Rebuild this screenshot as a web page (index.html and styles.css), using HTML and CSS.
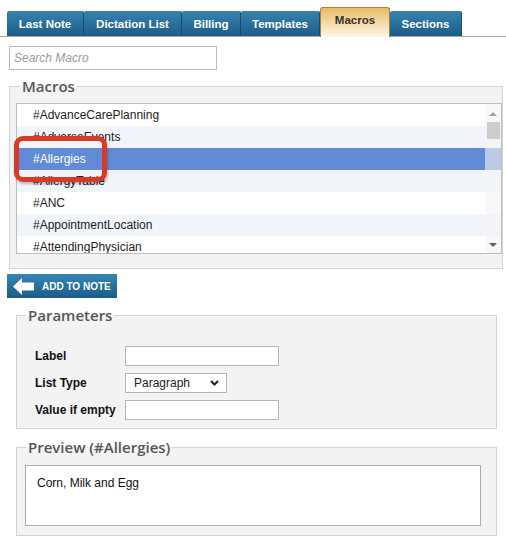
FILE: index.html
```html
<!DOCTYPE html>
<html>
<head>
<meta charset="utf-8">
<link rel="stylesheet" href="styles.css">
</head>
<body>
<div class="tabs">
  <div class="tab tab-last">Last Note</div>
  <div class="tab tab-dict">Dictation List</div>
  <div class="tab tab-bill">Billing</div>
  <div class="tab tab-tmpl">Templates</div>
  <div class="tab tab-macro active">Macros</div>
  <div class="tab tab-sect">Sections</div>
</div>

<div class="search-row">
  <input class="search" type="text" placeholder="Search Macro">
</div>

<fieldset class="box macros">
  <legend>Macros</legend>
  <div class="list">
    <div class="row">#AdvanceCarePlanning</div>
    <div class="row alt">#AdverseEvents</div>
    <div class="row selected">#Allergies</div>
    <div class="row alt">#AllergyTable</div>
    <div class="row">#ANC</div>
    <div class="row alt">#AppointmentLocation</div>
    <div class="row">#AttendingPhysician</div>
    <div class="scrollbar">
      <div class="arrow up"></div>
      <div class="thumb"></div>
      <div class="arrow down"></div>
    </div>
  </div>
  <div class="highlight"></div>
</fieldset>

<button class="add-btn" type="button">
  <svg class="add-icon" width="21" height="17" viewBox="0 0 21 17">
    <path d="M0 8.5 L9 0 L9 4.5 L21 4.5 L21 12.5 L9 12.5 L9 17 Z" fill="#ffffff"/>
  </svg>
  <span>ADD TO NOTE</span>
</button>

<fieldset class="box params">
  <legend>Parameters</legend>
  <div class="form">
    <label class="lbl">Label</label>
    <input class="field" type="text">
    <label class="lbl">List Type</label>
    <div class="select-wrap">
      <select class="select">
        <option>Paragraph</option>
      </select>
      <svg class="chev" width="9" height="6" viewBox="0 0 9 6"><path d="M1 1 L4.5 4.5 L8 1" fill="none" stroke="#222" stroke-width="2"/></svg>
    </div>
    <label class="lbl">Value if empty</label>
    <input class="field" type="text">
  </div>
</fieldset>

<fieldset class="box preview">
  <legend>Preview (#Allergies)</legend>
  <div class="preview-box">Corn, Milk and Egg</div>
</fieldset>
</body>
</html>
```

FILE: styles.css
```css
* { box-sizing: border-box; }
body {
  margin: 0;
  font-family: "Liberation Sans", Arial, sans-serif;
  font-size: 12px;
  color: #222;
  background: #fff;
}

.tabs {
  display: flex;
  align-items: flex-end;
  padding: 7px 0 0 7px;
  border-bottom: 1px solid #a9a49c;
  height: 37px;
}
.tab {
  height: 25px;
  line-height: 26px;
  text-align: center;
  color: #fff;
  font-weight: bold;
  font-size: 11.5px;
  background: linear-gradient(#3983b0, #1b5c87);
  border-right: 1px solid #174c70;
  border-radius: 2px 2px 0 0;
}
.tab-last { width: 77px; }
.tab-dict { width: 98px; }
.tab-bill { width: 59px; }
.tab-tmpl { width: 79px; }
.tab-macro { width: 70px; }
.tab-sect { width: 72px; }
.tab.active {
  height: 30px;
  line-height: 25px;
  margin-bottom: -1px;
  color: #3a3328;
  background: linear-gradient(#e8bb66, #fdf7e8);
  border: 1px solid #a5813f;
  border-bottom: none;
  border-radius: 3px 3px 0 0;
}

.search-row { padding: 9px 0 0 9px; }
.search {
  width: 208px;
  height: 24px;
  border: 1px solid #bcbcbc;
  padding: 0 4px;
  font-family: "Liberation Sans", Arial, sans-serif;
  font-size: 12px;
}
.search::placeholder { color: #9a9a9a; font-style: italic; }

.box {
  margin: 0;
  min-width: 0;
  border: 1px solid #d3d3d3;
  background: #f3f3f3;
}
.box legend {
  font-family: "Open Sans", sans-serif;
  font-weight: 600;
  font-size: 15px;
  line-height: 20px;
  color: #575757;
  padding: 0 2px;
  margin-left: 1px;
}

.macros {
  position: relative;
  margin: 6px 3px 0 9px;
  padding: 7px 0 14px 6px;
}
.macros legend { margin-left: 4px; }
.list {
  position: relative;
  height: 151px;
  border: 1px solid #bebebe;
  background: #fff;
  overflow: hidden;
}
.row {
  height: 22px;
  line-height: 22px;
  padding-left: 16px;
  color: #222;
}
.row.alt { background: #f1f5fa; }
.row.selected { background: #618bd6; color: #fff; }

.scrollbar {
  position: absolute;
  top: 0;
  right: 0;
  bottom: 0;
  width: 16px;
  background: rgba(244, 244, 244, 0.62);
  display: flex;
  flex-direction: column;
  align-items: center;
}
.arrow {
  width: 0;
  height: 0;
  border-left: 4px solid transparent;
  border-right: 4px solid transparent;
}
.arrow.up { border-bottom: 4px solid #a3a3a3; margin-top: 8px; }
.arrow.down { border-top: 4px solid #606060; margin-top: auto; margin-bottom: 6px; }
.thumb {
  width: 13px;
  height: 17px;
  margin-top: 6px;
  background: #cdcdcd;
}

.highlight {
  position: absolute;
  left: 4px;
  top: 40px;
  width: 93px;
  height: 46px;
  border: 5px solid #d93a28;
  border-radius: 9px;
  box-shadow: 1px 2px 3px rgba(0, 0, 0, 0.25);
}

.add-btn {
  display: flex;
  align-items: center;
  gap: 8px;
  margin: 5px 0 0 7px;
  width: 110px;
  height: 24px;
  padding: 0 0 0 6px;
  border: none;
  background: linear-gradient(#3686b5, #1b5c88);
  color: #fff;
  font-family: "Liberation Sans", Arial, sans-serif;
  font-weight: bold;
  font-size: 10px;
}

.params {
  margin: 7px 9px 0 16px;
  padding: 21px 0 8px 8px;
}
.form {
  display: grid;
  grid-template-columns: 90px auto;
  row-gap: 7px;
  align-items: center;
  justify-content: start;
  padding-left: 10px;
}
.lbl {
  font-weight: bold;
  font-size: 12px;
  color: #111;
}
.field {
  width: 154px;
  height: 20px;
  border: 1px solid #b5b5b5;
  background: #fff;
}
.select-wrap {
  position: relative;
  width: 102px;
  height: 20px;
}
.select {
  appearance: none;
  -webkit-appearance: none;
  width: 102px;
  height: 20px;
  border: 1px solid #b5b5b5;
  border-radius: 0;
  background: #fff;
  padding: 0 0 0 8px;
  font-family: "Liberation Sans", Arial, sans-serif;
  font-size: 12px;
  color: #222;
}
.chev {
  position: absolute;
  right: 8px;
  top: 7px;
  pointer-events: none;
}

.preview {
  margin: 8px 9px 0 16px;
  padding: 8px 15px 9px 8px;
}
.preview-box {
  height: 61px;
  border: 1px solid #acacac;
  background: #fff;
  padding: 10px 11px;
  font-size: 12px;
  color: #111;
}
```
